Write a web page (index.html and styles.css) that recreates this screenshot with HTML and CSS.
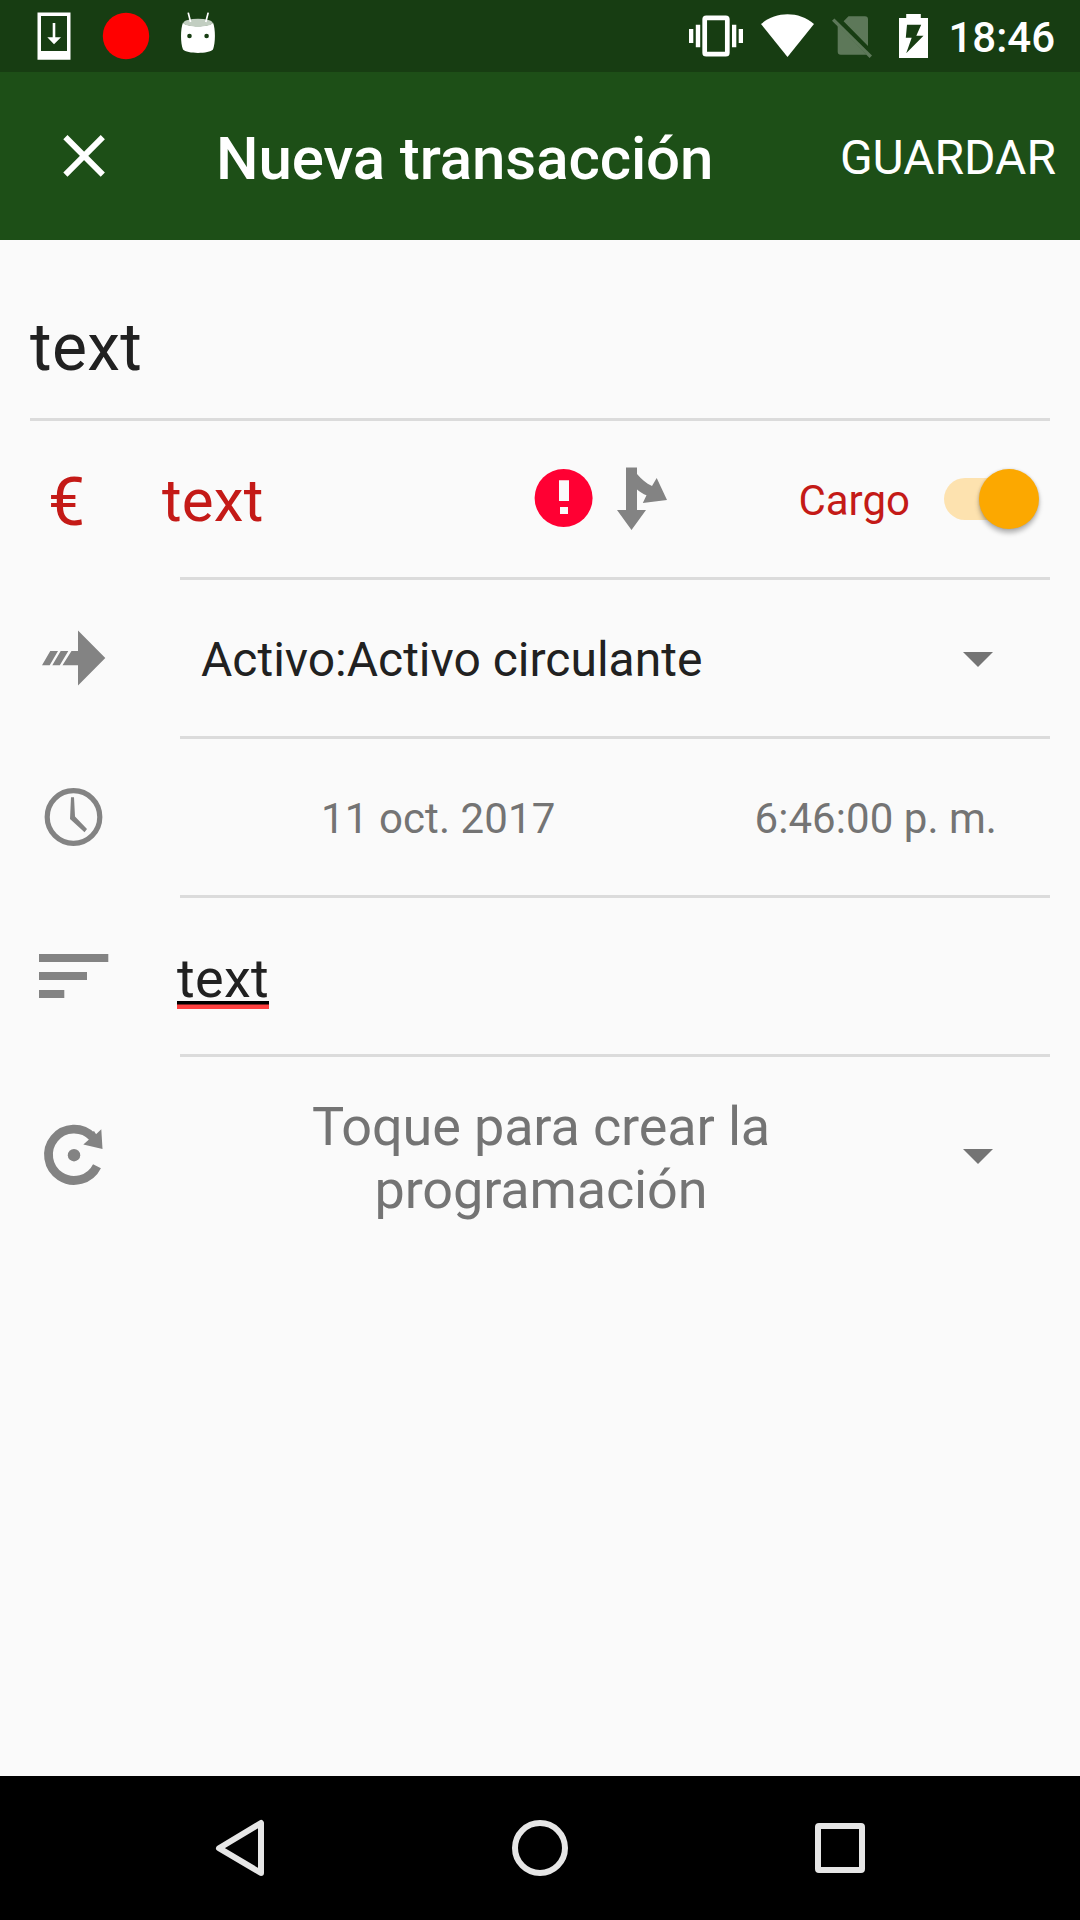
FILE: index.html
```html
<!DOCTYPE html>
<html lang="es">
<head>
<meta charset="utf-8">
<title>Nueva transacción</title>
<link rel="stylesheet" href="styles.css">
</head>
<body>
<div class="screen">
  <header class="status">
    <svg class="status-left" viewBox="0 0 240 72">
      <path fill="#fff" fill-rule="evenodd" d="M37.5 12.5H70.5V59.7H37.5ZM41 16V51H67V16Z"/>
      <path fill="#fff" d="M52.7 23H55.3V37.2H61L54 44.3L47.3 37.2H52.7Z"/>
      <circle cx="126" cy="36" r="23.2" fill="#f00"/>
      <path fill="#fff" d="M183 22.5C186 27.5 210 27.5 213 22.5C215.6 29 215.6 43 213 49.5C209 54 187 54 183 49.5C180.4 43 180.4 29 183 22.5Z"/>
      <ellipse cx="198" cy="22.7" rx="14.5" ry="3.9" fill="#c2cec1"/>
      <path stroke="#fff" stroke-width="1.7" fill="none" d="M188.2 12.6L190.6 22M208.2 12.6L205.8 22"/>
      <circle cx="189.5" cy="36" r="2.3" fill="#173d12"/><circle cx="206.6" cy="36" r="2.3" fill="#173d12"/>
    </svg>
    <div class="status-right">
      <svg class="status-icons" viewBox="680 0 260 72">
        <path fill="#fff" d="M689 29h4.3v14H689zM695.8 24.7h4.4v22.6h-4.4zM732 24.7h4.3v22.6H732zM738.7 29h4.3v14h-4.3z"/>
        <rect x="704.7" y="17.8" width="22.6" height="36.4" rx="1.5" fill="none" stroke="#fff" stroke-width="4.7"/>
        <path fill="#fff" d="M761 24C776 11 799 11 814 24L787.5 57Z"/>
        <g fill="#5d7859"><path d="M848.5 16.3H865Q868 16.3 868 19.3V46L843.6 21.3ZM837.7 25.5L866.6 54.7H840.7Q837.7 54.7 837.7 51.7Z"/><path d="M834.4 18.5L872 55.5L869.6 57.9L832 20.8Z"/></g>
        <path fill="#fff" fill-rule="evenodd" d="M906.2 14H920.8V18H928V58H899V18H906.2ZM907 24.7L905.8 37.7H911.7L906.2 53.3L923.5 35.7H916.3L921.2 24.7Z"/>
      </svg>
      <time class="clock">18:46</time>
    </div>
  </header>

  <div class="toolbar">
    <svg class="close" viewBox="0 0 216 168"><path stroke="#fff" stroke-width="5.9" d="M65.4 65.2L102.8 102.6M102.8 65.2L65.4 102.6"/></svg>
    <h1 class="title">Nueva transacción</h1>
    <button class="save">GUARDAR</button>
  </div>

  <main class="form">
    <div class="name">text</div>

    <div class="row red">
      <span class="currency">€</span>
      <div class="field amount">
        <span class="amount-text">text</span>
        <svg class="amount-icons" viewBox="520 421 160 156">
          <circle cx="563.6" cy="498" r="29" fill="#ff0033"/>
          <path fill="#fafafa" d="M559 480.2h10v20.8h-10zM560 507h8v7h-8z"/>
          <path fill="#838383" d="M626 467.5H637V474C641 479 646 483.3 652 486L656.7 478L667 500L642.8 503L646.5 495.3C643 494 640 492 637 489.5V510H646L631.5 530L617 510H626Z"/>
        </svg>
        <span class="type">Cargo</span>
        <span class="switch"><span class="thumb"></span></span>
      </div>
    </div>

    <div class="row">
      <svg class="icon" viewBox="30 580 150 159"><path fill="#838383" d="M78 630.5L105.3 658L78 685.5V665.2H62.5L71.5 651H78ZM50.3 651H58L49.7 665.2H42ZM60.7 651H68.3L59.8 665.2H52.3Z"/></svg>
      <div class="field account">Activo:Activo circulante<span class="caret"></span></div>
    </div>

    <div class="row">
      <svg class="icon" viewBox="30 739 150 159"><circle cx="73.5" cy="817" r="26.3" fill="none" stroke="#838383" stroke-width="5.2"/><path fill="#838383" d="M71 797.3H74L75 816.5L87 829L84.5 832.3L70 819Z"/></svg>
      <div class="field when"><span class="date">11 oct. 2017</span><span class="time">6:46:00 p. m.</span></div>
    </div>

    <div class="row">
      <svg class="icon" viewBox="30 898 150 159"><path fill="#838383" d="M39 954h69.3v8H39zM39 972h48v8H39zM39 990h25.3v8H39z"/></svg>
      <div class="field note"><span class="spell">text</span></div>
    </div>

    <div class="row last">
      <svg class="icon" viewBox="30 1057 150 159"><circle cx="74" cy="1155.2" r="6.2" fill="#838383"/><path fill="none" stroke="#838383" stroke-width="8.8" d="M92.5 1137A25.6 25.6 0 1 0 97 1166.2"/><path fill="#838383" d="M101.3 1129.3L102.5 1149L83.3 1144.5L89 1139.5L87 1136L94 1131L96 1134.3Z"/></svg>
      <div class="field schedule"><span class="schedule-text">Toque para crear la programación</span><span class="caret"></span></div>
    </div>
  </main>

  <nav class="navbar">
    <svg class="nav-icon" viewBox="200 1776 80 144"><path fill="none" stroke="#e6e6e6" stroke-width="6" stroke-linejoin="round" d="M261 1823V1873L219 1848.2Z"/></svg>
    <svg class="nav-icon" viewBox="500 1776 80 144"><circle cx="540" cy="1848" r="25" fill="none" stroke="#e6e6e6" stroke-width="6"/></svg>
    <svg class="nav-icon" viewBox="800 1776 80 144"><rect x="818" y="1826" width="44" height="44" rx="1" fill="none" stroke="#e6e6e6" stroke-width="6"/></svg>
  </nav>
</div>
</body>
</html>
```
FILE: styles.css
```css
* { box-sizing: border-box; }
body { margin: 0; background: #fafafa; font-family: Roboto, "Noto Sans", sans-serif; color: #212121; }
svg { display: block; flex: none; }
.screen { width: 1080px; height: 1920px; display: flex; flex-direction: column; overflow: hidden; }

.status { height: 72px; background: #173d12; display: flex; justify-content: space-between; color: #fff; }
.status-left { width: 240px; height: 72px; }
.status-right { display: flex; padding-right: 25px; }
.status-icons { width: 260px; height: 72px; }
.clock { width: 115px; text-align: right; white-space: nowrap; font-size: 42px; font-weight: 500; line-height: 72px; padding-top: 2px; }

.toolbar { height: 168px; background: #1d4f17; display: flex; color: #fff; padding-right: 24px; }
.close { width: 216px; height: 168px; }
.title { margin: 0; flex: 1; font-size: 60px; font-weight: 500; letter-spacing: -.08px; line-height: 168px; padding-top: 3px; white-space: nowrap; }
.save { border: 0; background: none; color: inherit; font: 48px Roboto, sans-serif; line-height: 168px; padding: 2px 0 0; }

.form { flex: 1; padding: 0 30px; }
.name { height: 181px; border-bottom: 3px solid #dbdbdb; font-size: 66px; letter-spacing: .3px; line-height: 140px; padding-top: 38px; }
.row { height: 159px; display: grid; grid-template-columns: 150px 870px; }
.red { color: #c41a17; }
.icon { width: 150px; height: 159px; }
.field { height: 159px; border-bottom: 3px solid #dbdbdb; display: flex; line-height: 156px; white-space: nowrap; }
.last .field { border: 0; }
.currency { font-size: 66px; line-height: 156px; padding: 4px 0 0 18px; }
.amount-text { width: 358px; margin-left: -18px; font-size: 60px; letter-spacing: .2px; padding-top: 2px; }
.amount-icons { width: 160px; height: 156px; }
.type { flex: 1; text-align: right; font-size: 42px; padding: 2px 34px 0 0; }
.switch { align-self: center; width: 94px; height: 42px; margin: 0 12px 0 0; border-radius: 21px; background: #fde2af; display: flex; justify-content: flex-end; align-items: center; }
.thumb { width: 60px; height: 60px; margin: -1px -1px 0 0; border-radius: 50%; background: #fca800; box-shadow: 0 4px 5px rgba(0, 0, 0, .28), 0 0 3px rgba(0, 0, 0, .15); }
.caret { width: 30px; height: 15px; background: #747474; clip-path: polygon(0 0, 100% 0, 50% 100%); }
.account { justify-content: space-between; font-size: 48px; padding: 2px 57px 0 21px; }
.account .caret { margin-top: 70px; }
.when { font-size: 42px; color: #747474; justify-content: space-between; padding: 2px 53px 0 141px; }
.date { letter-spacing: .1px; }
.time { letter-spacing: .05px; }
.note { font-size: 54px; letter-spacing: .3px; padding: 3px 0 0; }
.spell { position: relative; height: 156px; margin-left: -3px; }
.spell::after { content: ""; position: absolute; left: 0; right: 0; top: 100px; height: 8px; background: linear-gradient(#000 3px, #ff4040 4px); }
.schedule { justify-content: space-between; height: 180px; padding: 38px 57px 0 60px; color: #747474; }
.schedule-text { width: 602px; font-size: 54px; letter-spacing: -.14px; line-height: 63px; text-align: center; white-space: normal; padding: 0 60px; }
.schedule .caret { margin-top: 54px; }

.navbar { height: 144px; background: #000; display: flex; justify-content: space-between; padding: 0 200px; }
.nav-icon { width: 80px; height: 144px; }
```
